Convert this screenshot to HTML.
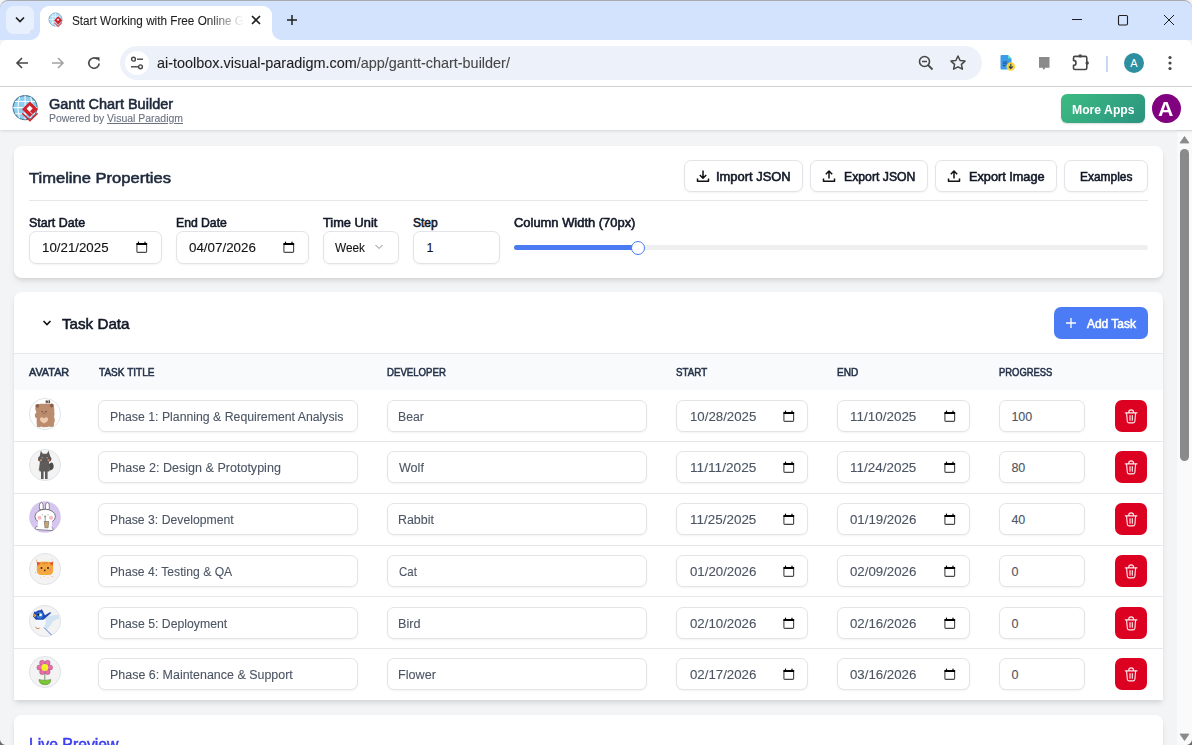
<!DOCTYPE html>
<html><head><meta charset="utf-8">
<style>
*{box-sizing:border-box;margin:0;padding:0}
html,body{width:1192px;height:745px;overflow:hidden;font-family:"Liberation Sans",sans-serif;background:#f3f4f6;position:relative}
.abs{position:absolute}
.t{position:absolute;white-space:nowrap;line-height:normal}
.card{background:#fff;border-radius:8px;box-shadow:0 4px 6px -1px rgba(0,0,0,.1),0 2px 4px -1px rgba(0,0,0,.06)}
.inp{position:absolute;background:#fff;border:1px solid #e2e4e8;border-radius:7px;box-shadow:0 1px 2px rgba(0,0,0,.05)}
.btn{position:absolute;background:#fff;border:1px solid #e2e4e8;border-radius:7px;box-shadow:0 1px 2px rgba(0,0,0,.05)}
.row-line{position:absolute;left:14px;width:1149px;height:1px;background:#e5e7eb}
.del{position:absolute;width:32px;height:32px;border-radius:7px;background:#dc0021}
</style></head>
<body>
<!-- TAB STRIP -->
<div class="abs" style="left:0;top:0;width:1192px;height:40px;background:#d3e3fd;border-radius:8px 8px 0 0;border-top:1px solid #a9abae"></div>
<div class="abs" style="left:6px;top:6px;width:28px;height:28px;border-radius:8px;background:#e8f0fe"></div>
<svg class="abs" style="left:14px;top:14px" width="12" height="12" viewBox="0 0 12 12"><path d="M2 3.5l4 4 4-4" fill="none" stroke="#1f1f1f" stroke-width="1.7"/></svg>
<div class="abs" style="left:40px;top:6px;width:232px;height:34px;background:#fff;border-radius:9px 9px 0 0"></div>
<div class="abs" style="left:30px;top:30px;width:10px;height:10px;background:radial-gradient(circle at 0 0,#d3e3fd 9.5px,#fff 10.5px)"></div>
<div class="abs" style="left:272px;top:30px;width:10px;height:10px;background:radial-gradient(circle at 100% 0,#d3e3fd 9.5px,#fff 10.5px)"></div>
<!-- favicon -->
<svg class="abs" style="left:48px;top:12px" width="16" height="16" viewBox="0 0 16 16">
<circle cx="7.5" cy="7.5" r="6.6" fill="#a9daf6" stroke="#8aa9b8" stroke-width="0.9"/>
<path d="M1 7.5h13M3 4.3h9M3 10.7h9M7.5 1v13M4.8 1.8v11.4" stroke="#e6f5fd" stroke-width="0.8" fill="none"/>
<path d="M10.2 4.2l4.1 4.1-4.1 4.1-4.1-4.1z" fill="#d3222b"/>
<path d="M10 6.4l1.3 1.3-1.3 1.3-1.3-1.3z" fill="#fff"/>
<path d="M6.4 10.6l3.8 3.8 3.8-3.8" fill="none" stroke="#e0585f" stroke-width="1.1"/>
</svg>
<svg class="abs" style="left:250px;top:14px" width="12" height="12" viewBox="0 0 12 12"><path d="M2 2l8 8M10 2l-8 8" stroke="#1f1f1f" stroke-width="1.6"/></svg>
<svg class="abs" style="left:286px;top:14px" width="12" height="12" viewBox="0 0 12 12"><path d="M6 1v10M1 6h10" stroke="#1f1f1f" stroke-width="1.5"/></svg>
<!-- window controls -->
<svg class="abs" style="left:1070px;top:13px" width="14" height="14" viewBox="0 0 14 14"><path d="M2 6.5h10" stroke="#1f1f1f" stroke-width="1"/></svg>
<svg class="abs" style="left:1116px;top:13px" width="14" height="14" viewBox="0 0 14 14"><rect x="2.5" y="2.5" width="9" height="9.5" rx="1.2" fill="none" stroke="#1f1f1f" stroke-width="1.1"/></svg>
<svg class="abs" style="left:1162px;top:13px" width="14" height="14" viewBox="0 0 14 14"><path d="M2 2l10 10M12 2l-10 10" stroke="#1f1f1f" stroke-width="1"/></svg>
<!-- TOOLBAR -->
<div class="abs" style="left:0;top:40px;width:1192px;height:46px;background:#fff;border-radius:8px 8px 0 0"></div>
<div class="abs" style="left:0;top:86px;width:1192px;height:1px;background:#d6d7da"></div>
<svg class="abs" style="left:14px;top:55px" width="16" height="16" viewBox="0 0 16 16"><path d="M14 8H3M8 3L3 8l5 5" fill="none" stroke="#474747" stroke-width="1.6"/></svg>
<svg class="abs" style="left:50px;top:55px" width="16" height="16" viewBox="0 0 16 16"><path d="M2 8h11M8 3l5 5-5 5" fill="none" stroke="#a3a3a3" stroke-width="1.6"/></svg>
<svg class="abs" style="left:86px;top:55px" width="16" height="16" viewBox="0 0 16 16"><path d="M13.2 8.5A5.2 5.2 0 1 1 11.5 4.2" fill="none" stroke="#474747" stroke-width="1.6"/><path d="M9.2 2.2h4.3v4.3z" fill="#474747"/></svg>
<div class="abs" style="left:120px;top:46px;width:862px;height:34px;border-radius:17px;background:#edf2fa"></div>
<div class="abs" style="left:125px;top:51px;width:24px;height:24px;border-radius:12px;background:#fff"></div>
<svg class="abs" style="left:129px;top:55px" width="16" height="16" viewBox="0 0 16 16"><circle cx="4.5" cy="4.2" r="1.9" fill="none" stroke="#474747" stroke-width="1.4"/><path d="M8 4.2h6" stroke="#474747" stroke-width="1.4"/><circle cx="11.5" cy="11.8" r="1.9" fill="none" stroke="#474747" stroke-width="1.4"/><path d="M2 11.8h7.5" stroke="#474747" stroke-width="1.4"/></svg>
<svg class="abs" style="left:917px;top:54px" width="18" height="18" viewBox="0 0 18 18"><circle cx="7.5" cy="7.5" r="5" fill="none" stroke="#474747" stroke-width="1.6"/><path d="M5 7.5h5" stroke="#474747" stroke-width="1.5"/><path d="M11 11l4.5 4.5" stroke="#474747" stroke-width="1.8"/></svg>
<svg class="abs" style="left:949px;top:54px" width="18" height="18" viewBox="0 0 18 18"><path d="M9 2l2.1 4.5 4.9.6-3.6 3.3 1 4.8L9 12.8l-4.4 2.4 1-4.8L2 7.1l4.9-.6z" fill="none" stroke="#474747" stroke-width="1.5" stroke-linejoin="round"/></svg>
<!-- extension icons -->
<svg class="abs" style="left:999px;top:54px" width="18" height="18" viewBox="0 0 18 18"><path d="M2.5 1h6.5l3.5 3.5v10a1 1 0 0 1-1 1h-9a1 1 0 0 1-1-1v-12.5a1 1 0 0 1 1-1z" fill="#3d9be9"/><path d="M9 1l3.5 3.5H9z" fill="#5fe0c8"/><path d="M3.8 8h4.5M3.8 9.8h4.5M3.8 11.6h3" stroke="#1d4f8c" stroke-width="0.9"/><circle cx="11.8" cy="12.5" r="4.3" fill="#f6d33a"/><path d="M11.8 9.8v4.5M9.9 12.5l1.9 1.9 1.9-1.9" fill="none" stroke="#263a5a" stroke-width="1.1"/></svg>
<svg class="abs" style="left:1036px;top:54px" width="16" height="18" viewBox="0 0 16 18"><path d="M3 3h10.5v10.8h-4.2l-1.5 2.2-1.5-2.2H3z" fill="#8a8a8a"/></svg>
<svg class="abs" style="left:1071px;top:53px" width="19" height="19" viewBox="0 0 19 19"><path d="M4 3.4h10.3q1.5 0 1.5 1.5v10.1q0 1.5-1.5 1.5H4q-1.5 0-1.5-1.5v-2.6a2.5 2.5 0 0 0 0-5V4.9q0-1.5 1.5-1.5z" fill="none" stroke="#474747" stroke-width="1.6" stroke-linejoin="round"/><circle cx="9.2" cy="2.9" r="1.7" fill="#474747"/><circle cx="16.2" cy="10" r="1.7" fill="#474747"/></svg>
<div class="abs" style="left:1106px;top:56px;width:2px;height:16px;background:#c7d7f5"></div>
<div class="abs" style="left:1124px;top:53px;width:20px;height:20px;border-radius:10px;background:#2e8fa0;color:#fff;font-size:11px;text-align:center;line-height:20px">A</div>
<svg class="abs" style="left:1162px;top:54px" width="16" height="18" viewBox="0 0 16 18"><circle cx="8" cy="3.5" r="1.6" fill="#474747"/><circle cx="8" cy="9" r="1.6" fill="#474747"/><circle cx="8" cy="14.5" r="1.6" fill="#474747"/></svg>

<!-- APP HEADER -->
<div class="abs" style="left:0;top:87px;width:1192px;height:43px;background:#fff;box-shadow:0 1px 3px rgba(0,0,0,.13)"></div>
<svg class="abs" style="left:11px;top:93px" width="29" height="29" viewBox="0 0 29 29">
<circle cx="14.1" cy="14.6" r="12" fill="#8fcdf0" stroke="#4d7f96" stroke-width="1.1"/>
<path d="M2.2 14.6h23.8M4 8.5h20M4 20.7h20M14.1 2.6v24M8.5 4q-3 10.6 0 21.2M19.7 4q3 10.6 0 21.2" stroke="#f3fbff" stroke-width="1.1" fill="none"/>
<path d="M18.9 8.5l8 7.8-8 7.8-8-7.8z" fill="#cf222c"/>
<path d="M18.7 12.4l3 3-3 3-3-3z" fill="#fff"/>
<path d="M16.2 15.9l5.6 5.6" stroke="#fff" stroke-width="0.8"/>
<path d="M11.2 20.2l7.7 7.4 7.7-7.4" fill="none" stroke="#cf222c" stroke-width="1.5"/>
</svg>
<div class="abs" style="left:1061px;top:94px;width:84px;height:29px;border-radius:6px;background:linear-gradient(135deg,#3dbb82,#2a9480);box-shadow:0 1px 2px rgba(0,0,0,.15)"></div>
<div class="abs" style="left:1152px;top:94px;width:29px;height:29px;border-radius:15px;background:#800080"></div>
<!-- CARD 1 -->
<div class="abs card" style="left:14px;top:146px;width:1149px;height:132px"></div>
<div class="abs" style="left:29px;top:200px;width:1119px;height:1px;background:#e5e7eb"></div>
<div class="btn" style="left:684px;top:160px;width:119px;height:32px"></div>
<div class="btn" style="left:810px;top:160px;width:118px;height:32px"></div>
<div class="btn" style="left:935px;top:160px;width:122px;height:32px"></div>
<div class="btn" style="left:1064px;top:160px;width:84px;height:32px"></div>
<svg class="abs" style="left:696px;top:169px" width="14" height="14" viewBox="0 0 14 14"><path d="M7 1.5v7.5M3.8 6l3.2 3.2L10.2 6M1.5 9.5v2.8h11V9.5" fill="none" stroke="#111" stroke-width="1.5" stroke-linejoin="round"/></svg>
<svg class="abs" style="left:822px;top:169px" width="14" height="14" viewBox="0 0 14 14"><path d="M7 9.5V2M3.8 5.2L7 2l3.2 3.2M1.5 9.5v2.8h11V9.5" fill="none" stroke="#111" stroke-width="1.5" stroke-linejoin="round"/></svg>
<svg class="abs" style="left:947px;top:169px" width="14" height="14" viewBox="0 0 14 14"><path d="M7 9.5V2M3.8 5.2L7 2l3.2 3.2M1.5 9.5v2.8h11V9.5" fill="none" stroke="#111" stroke-width="1.5" stroke-linejoin="round"/></svg>
<div class="inp" style="left:29px;top:231px;width:133px;height:33px"></div>
<div class="inp" style="left:176px;top:231px;width:133px;height:33px"></div>
<div class="inp" style="left:323px;top:231px;width:76px;height:33px"></div>
<div class="inp" style="left:413px;top:231px;width:87px;height:33px"></div>
<svg class="abs" style="left:135px;top:240.00px" width="13" height="14" viewBox="0 0 13 14"><path d="M1.9 4.6v6.9q0 .9.9.9h7.9q.9 0 .9-.9V4.6" stroke="#4a4a4a" stroke-width="1.15" fill="none"/><rect x="1.3" y="3.1" width="10.9" height="1.9" rx=".4" fill="#000"/><path d="M2.6 3.3l.9-2.2.9 2.2zM9.1 3.3l.9-2.2.9 2.2z" fill="#000"/></svg><svg class="abs" style="left:282px;top:240.00px" width="13" height="14" viewBox="0 0 13 14"><path d="M1.9 4.6v6.9q0 .9.9.9h7.9q.9 0 .9-.9V4.6" stroke="#4a4a4a" stroke-width="1.15" fill="none"/><rect x="1.3" y="3.1" width="10.9" height="1.9" rx=".4" fill="#000"/><path d="M2.6 3.3l.9-2.2.9 2.2zM9.1 3.3l.9-2.2.9 2.2z" fill="#000"/></svg>
<svg class="abs" style="left:374px;top:243px" width="10" height="8" viewBox="0 0 10 8"><path d="M1.5 2l3.5 3.5L8.5 2" fill="none" stroke="#8a8a8a" stroke-width="1"/></svg>
<div class="abs" style="left:514px;top:245px;width:634px;height:5px;border-radius:3px;background:#efefef"></div>
<div class="abs" style="left:514px;top:245px;width:124px;height:5px;border-radius:3px;background:#4a7bf3"></div>
<div class="abs" style="left:631px;top:241px;width:14px;height:14px;border-radius:7px;background:#fff;border:1.5px solid #4a7bf3"></div>
<!-- CARD 2 -->
<div class="abs card" style="left:14px;top:292px;width:1149px;height:408px;border-radius:8px 8px 0 0"></div>
<div class="abs" style="left:14px;top:353px;width:1149px;height:37px;background:#f8fafc;border-top:1px solid #e5e7eb"></div>
<svg class="abs" style="left:41px;top:317px" width="12" height="12" viewBox="0 0 12 12"><path d="M2.5 4l3.5 3.5L9.5 4" fill="none" stroke="#111" stroke-width="1.6"/></svg>
<div class="abs" style="left:1054px;top:307px;width:94px;height:32px;border-radius:7px;background:#4b7bf5"></div>
<svg class="abs" style="left:1065px;top:317px" width="12" height="12" viewBox="0 0 12 12"><path d="M6 1v10M1 6h10" stroke="#fff" stroke-width="1.3"/></svg>

<svg class="abs" style="left:27px;top:396px" width="36" height="36" viewBox="0 0 36 36"><circle cx="18" cy="18" r="15.6" fill="#fff" stroke="#dde1e8" stroke-width="0.9"/>
<path d="M19.2 4.3v3M21 4.3v3M19.2 5.8h1.8M22.6 4.3v3" stroke="#3a2a20" stroke-width="0.9"/>
<path d="M8.2 13q.2-5 5-5.2h9q4.8.2 5 5.2l.3 5-.4 2.5.8 4.3-.8 2.2-.3 3.5-3 .6-2-.6-1 .6-5 .2-1.2-.8-2 .7-2.6-.5-.4-4.3.1-4.2-1.6-.9-.3-3 1.6-1.7z" fill="#bc8c6e"/>
<circle cx="10.3" cy="9.8" r="1.9" fill="#8d5f45"/><circle cx="24.8" cy="9.5" r="1.9" fill="#8d5f45"/>
<circle cx="15.3" cy="15.8" r="0.8" fill="#6d4a38"/><circle cx="19" cy="15.8" r="0.8" fill="#6d4a38"/>
<path d="M16.2 17.3q1 .8 2 0" stroke="#6d4a38" stroke-width="0.5" fill="none"/>
<path d="M17 22.6q-2-2.3-3.6-.8-1.3 1.7.5 3.6l3.1 2.1 3.2-2.1q1.8-1.9.5-3.6-1.6-1.5-3.7.8z" fill="#eecaae"/>
</svg>
<div class="inp" style="left:98px;top:400.00px;width:260px;height:32px"></div>
<div class="inp" style="left:387px;top:400.00px;width:260px;height:32px"></div>
<div class="inp" style="left:676px;top:400.00px;width:132px;height:32px"></div>
<svg class="abs" style="left:782px;top:409.00px" width="13" height="14" viewBox="0 0 13 14"><path d="M1.9 4.6v6.9q0 .9.9.9h7.9q.9 0 .9-.9V4.6" stroke="#4a4a4a" stroke-width="1.15" fill="none"/><rect x="1.3" y="3.1" width="10.9" height="1.9" rx=".4" fill="#000"/><path d="M2.6 3.3l.9-2.2.9 2.2zM9.1 3.3l.9-2.2.9 2.2z" fill="#000"/></svg>
<div class="inp" style="left:837px;top:400.00px;width:133px;height:32px"></div>
<svg class="abs" style="left:943px;top:409.00px" width="13" height="14" viewBox="0 0 13 14"><path d="M1.9 4.6v6.9q0 .9.9.9h7.9q.9 0 .9-.9V4.6" stroke="#4a4a4a" stroke-width="1.15" fill="none"/><rect x="1.3" y="3.1" width="10.9" height="1.9" rx=".4" fill="#000"/><path d="M2.6 3.3l.9-2.2.9 2.2zM9.1 3.3l.9-2.2.9 2.2z" fill="#000"/></svg>
<div class="inp" style="left:999px;top:400.00px;width:86px;height:32px"></div>
<div class="del" style="left:1115px;top:400.00px"></div>
<svg class="abs" style="left:1124px;top:408.00px" width="14" height="16" viewBox="0 0 14 16"><path d="M1.3 4.8h11.7M4.8 4.6V4q0-2.2 2.35-2.2T9.5 4v.6M2.6 5l.7 8.2q.2 1.6 1.6 1.6h4.4q1.4 0 1.6-1.6l.7-8.2M6 7.6v4.6M8.3 7.6v4.6" fill="none" stroke="#fff" stroke-width="1.15" stroke-linejoin="round" stroke-linecap="round" opacity=".92"/></svg>
<div class="row-line" style="top:441px"></div>
<svg class="abs" style="left:27px;top:447px" width="36" height="36" viewBox="0 0 36 36"><circle cx="18" cy="18" r="15.6" fill="#f3f3f3" stroke="#dde1e8" stroke-width="0.9"/>
<path d="M13.8 3.8l2 3h4l1.8-3 1.2 4.2 1.4 4.6-1.4 1.6h-9.6l-1.6-1.6 1.4-4.6z" fill="#5c5858"/>
<path d="M11 11.5q0-2 2-2.2h9q2.2.2 2.4 2.2l-.4 2.3-2.5 1.2h-7.8l-2.4-1.2z" fill="#5c5858"/>
<circle cx="14" cy="13.3" r="1" fill="#e98a63"/><circle cx="21.5" cy="13.3" r="1" fill="#e98a63"/>
<path d="M14.6 10.8h1.6M19.4 10.8h1.6" stroke="#cfcfcf" stroke-width="0.6"/>
<path d="M12.8 15h9.2l.3 9.5h-9.7z" fill="#5f5b5a"/>
<path d="M12.8 16.5l-1.2 6.8 1.2.3z" fill="#5f5b5a"/>
<path d="M14 24h2.6v8h-2.6zM18 24h2.6v8h-2.6z" fill="#5f5b5a"/>
<path d="M22 17q3.8-3.8 4.6 1.5.6 4.2-4.3 5.3z" fill="#4d4a4a"/>
</svg>
<div class="inp" style="left:98px;top:451.00px;width:260px;height:32px"></div>
<div class="inp" style="left:387px;top:451.00px;width:260px;height:32px"></div>
<div class="inp" style="left:676px;top:451.00px;width:132px;height:32px"></div>
<svg class="abs" style="left:782px;top:460.00px" width="13" height="14" viewBox="0 0 13 14"><path d="M1.9 4.6v6.9q0 .9.9.9h7.9q.9 0 .9-.9V4.6" stroke="#4a4a4a" stroke-width="1.15" fill="none"/><rect x="1.3" y="3.1" width="10.9" height="1.9" rx=".4" fill="#000"/><path d="M2.6 3.3l.9-2.2.9 2.2zM9.1 3.3l.9-2.2.9 2.2z" fill="#000"/></svg>
<div class="inp" style="left:837px;top:451.00px;width:133px;height:32px"></div>
<svg class="abs" style="left:943px;top:460.00px" width="13" height="14" viewBox="0 0 13 14"><path d="M1.9 4.6v6.9q0 .9.9.9h7.9q.9 0 .9-.9V4.6" stroke="#4a4a4a" stroke-width="1.15" fill="none"/><rect x="1.3" y="3.1" width="10.9" height="1.9" rx=".4" fill="#000"/><path d="M2.6 3.3l.9-2.2.9 2.2zM9.1 3.3l.9-2.2.9 2.2z" fill="#000"/></svg>
<div class="inp" style="left:999px;top:451.00px;width:86px;height:32px"></div>
<div class="del" style="left:1115px;top:451.00px"></div>
<svg class="abs" style="left:1124px;top:459.00px" width="14" height="16" viewBox="0 0 14 16"><path d="M1.3 4.8h11.7M4.8 4.6V4q0-2.2 2.35-2.2T9.5 4v.6M2.6 5l.7 8.2q.2 1.6 1.6 1.6h4.4q1.4 0 1.6-1.6l.7-8.2M6 7.6v4.6M8.3 7.6v4.6" fill="none" stroke="#fff" stroke-width="1.15" stroke-linejoin="round" stroke-linecap="round" opacity=".92"/></svg>
<div class="row-line" style="top:493px"></div>
<svg class="abs" style="left:27px;top:499px" width="36" height="36" viewBox="0 0 36 36"><circle cx="18" cy="18" r="15.8" fill="#d6c5ef"/>
<path d="M12.5 10.5q-.6-7 1.8-7 2.4 0 1.8 7zM18.6 10.5q-.6-7 1.8-7 2.4 0 1.8 7z" fill="#fff" stroke="#4a4a4a" stroke-width="0.6"/>
<path d="M9.5 27.5l-1.5 2 1.7 1 8.5.6 7.5.4.5-1.5-2-2.5z" fill="#fff" stroke="#4a4a4a" stroke-width="0.6"/>
<ellipse cx="18.2" cy="17.5" rx="10.2" ry="7.2" fill="#fff" stroke="#4a4a4a" stroke-width="0.7"/>
<path d="M11 22l-.5 7 14 1 .5-8z" fill="#fff"/>
<circle cx="12.5" cy="18.8" r="2" fill="#f6b9be"/><circle cx="24" cy="18.8" r="2" fill="#f6b9be"/>
<path d="M14.8 15.8h1M20.5 15.8h1M17.2 17.5q1 1 2 0M18.2 16.5v7" stroke="#555" stroke-width="0.6" fill="none"/>
<path d="M17.3 22.5h4.5l-.7 6.3h-3.2z" fill="#caa36f" stroke="#555" stroke-width="0.5"/>
</svg>
<div class="inp" style="left:98px;top:503.00px;width:260px;height:32px"></div>
<div class="inp" style="left:387px;top:503.00px;width:260px;height:32px"></div>
<div class="inp" style="left:676px;top:503.00px;width:132px;height:32px"></div>
<svg class="abs" style="left:782px;top:512.00px" width="13" height="14" viewBox="0 0 13 14"><path d="M1.9 4.6v6.9q0 .9.9.9h7.9q.9 0 .9-.9V4.6" stroke="#4a4a4a" stroke-width="1.15" fill="none"/><rect x="1.3" y="3.1" width="10.9" height="1.9" rx=".4" fill="#000"/><path d="M2.6 3.3l.9-2.2.9 2.2zM9.1 3.3l.9-2.2.9 2.2z" fill="#000"/></svg>
<div class="inp" style="left:837px;top:503.00px;width:133px;height:32px"></div>
<svg class="abs" style="left:943px;top:512.00px" width="13" height="14" viewBox="0 0 13 14"><path d="M1.9 4.6v6.9q0 .9.9.9h7.9q.9 0 .9-.9V4.6" stroke="#4a4a4a" stroke-width="1.15" fill="none"/><rect x="1.3" y="3.1" width="10.9" height="1.9" rx=".4" fill="#000"/><path d="M2.6 3.3l.9-2.2.9 2.2zM9.1 3.3l.9-2.2.9 2.2z" fill="#000"/></svg>
<div class="inp" style="left:999px;top:503.00px;width:86px;height:32px"></div>
<div class="del" style="left:1115px;top:503.00px"></div>
<svg class="abs" style="left:1124px;top:511.00px" width="14" height="16" viewBox="0 0 14 16"><path d="M1.3 4.8h11.7M4.8 4.6V4q0-2.2 2.35-2.2T9.5 4v.6M2.6 5l.7 8.2q.2 1.6 1.6 1.6h4.4q1.4 0 1.6-1.6l.7-8.2M6 7.6v4.6M8.3 7.6v4.6" fill="none" stroke="#fff" stroke-width="1.15" stroke-linejoin="round" stroke-linecap="round" opacity=".92"/></svg>
<div class="row-line" style="top:545px"></div>
<svg class="abs" style="left:27px;top:551px" width="36" height="36" viewBox="0 0 36 36"><circle cx="18" cy="18" r="15.6" fill="#f3f3f3" stroke="#dde1e8" stroke-width="0.9"/>
<path d="M9.8 16q0-4.6 4-5.2h8.4q4 .6 4 5.2v3.5q-.3 4.5-4.3 4.5h-7.8q-4-.1-4.3-4.5z" fill="#f4a83f"/>
<path d="M9.6 10.6l4.2 1.3-3.3 3.3zM26.4 10.6l-4.2 1.3 3.3 3.3z" fill="#e8562b"/>
<path d="M16 11v2.4M18 10.8v2.6M20 11v2.4" stroke="#d57b32" stroke-width="0.9"/>
<circle cx="14.5" cy="17" r="1" fill="#3b2a20"/><circle cx="21" cy="17" r="1" fill="#3b2a20"/>
<circle cx="17.8" cy="19.3" r="0.9" fill="#3b2a20"/>
<circle cx="12.3" cy="18.5" r="1" fill="#f08a78"/><circle cx="23.2" cy="18.5" r="1" fill="#f08a78"/>
<circle cx="9.5" cy="9.2" r="0.6" fill="#f4a83f"/><circle cx="25" cy="8.8" r="0.6" fill="#f6b0a0"/><circle cx="8.5" cy="21.5" r="0.5" fill="#f4a83f"/><circle cx="17.3" cy="25.5" r="0.6" fill="#f4c070"/><circle cx="13.8" cy="26.8" r="0.5" fill="#f6b0a0"/><circle cx="25.3" cy="25.7" r="0.6" fill="#f6a0a0"/><circle cx="21" cy="26.8" r="0.5" fill="#f6b0a0"/>
</svg>
<div class="inp" style="left:98px;top:555.00px;width:260px;height:32px"></div>
<div class="inp" style="left:387px;top:555.00px;width:260px;height:32px"></div>
<div class="inp" style="left:676px;top:555.00px;width:132px;height:32px"></div>
<svg class="abs" style="left:782px;top:564.00px" width="13" height="14" viewBox="0 0 13 14"><path d="M1.9 4.6v6.9q0 .9.9.9h7.9q.9 0 .9-.9V4.6" stroke="#4a4a4a" stroke-width="1.15" fill="none"/><rect x="1.3" y="3.1" width="10.9" height="1.9" rx=".4" fill="#000"/><path d="M2.6 3.3l.9-2.2.9 2.2zM9.1 3.3l.9-2.2.9 2.2z" fill="#000"/></svg>
<div class="inp" style="left:837px;top:555.00px;width:133px;height:32px"></div>
<svg class="abs" style="left:943px;top:564.00px" width="13" height="14" viewBox="0 0 13 14"><path d="M1.9 4.6v6.9q0 .9.9.9h7.9q.9 0 .9-.9V4.6" stroke="#4a4a4a" stroke-width="1.15" fill="none"/><rect x="1.3" y="3.1" width="10.9" height="1.9" rx=".4" fill="#000"/><path d="M2.6 3.3l.9-2.2.9 2.2zM9.1 3.3l.9-2.2.9 2.2z" fill="#000"/></svg>
<div class="inp" style="left:999px;top:555.00px;width:86px;height:32px"></div>
<div class="del" style="left:1115px;top:555.00px"></div>
<svg class="abs" style="left:1124px;top:563.00px" width="14" height="16" viewBox="0 0 14 16"><path d="M1.3 4.8h11.7M4.8 4.6V4q0-2.2 2.35-2.2T9.5 4v.6M2.6 5l.7 8.2q.2 1.6 1.6 1.6h4.4q1.4 0 1.6-1.6l.7-8.2M6 7.6v4.6M8.3 7.6v4.6" fill="none" stroke="#fff" stroke-width="1.15" stroke-linejoin="round" stroke-linecap="round" opacity=".92"/></svg>
<div class="row-line" style="top:596px"></div>
<svg class="abs" style="left:27px;top:603px" width="36" height="36" viewBox="0 0 36 36"><circle cx="18" cy="18" r="15.6" fill="#f3f3f3" stroke="#dde1e8" stroke-width="0.9"/>
<path d="M18 15q6-3.5 13.8-3l.2 3.5-5.5 2.5-6 8.2-3-2.2z" fill="#d2e3f2"/>
<path d="M8.5 17.5q1-2.5 5-1.5l5 .5q1 5-2 7.5h-5.5q-3-2-2.5-6.5z" fill="#f4f8fc"/>
<path d="M7.3 8.5l1 .5 2.8-1.5 3-.6 .6-.8 1 1.6 2.2 4.5 5-3 1.5 .6-4.5 4-3.5 3h-7.5l-3.1-3.5z" fill="#2448b8"/>
<circle cx="12.8" cy="12.3" r="3.2" fill="#2f7fd8"/>
<circle cx="13.5" cy="11.8" r="1.4" fill="#fff"/><circle cx="11.2" cy="11.6" r="1.1" fill="#111"/>
<circle cx="7.6" cy="12.5" r="1.2" fill="#f3d62a"/><circle cx="7.4" cy="12.5" r="0.5" fill="#d9441d"/>
<path d="M17 24.5l7.5 7.5" stroke="#3b6cc0" stroke-width="0.9"/>
<path d="M8.3 24.2l1.7 1.3 2.6-.2" stroke="#d2691e" stroke-width="0.8" fill="none"/>
</svg>
<div class="inp" style="left:98px;top:607.00px;width:260px;height:32px"></div>
<div class="inp" style="left:387px;top:607.00px;width:260px;height:32px"></div>
<div class="inp" style="left:676px;top:607.00px;width:132px;height:32px"></div>
<svg class="abs" style="left:782px;top:616.00px" width="13" height="14" viewBox="0 0 13 14"><path d="M1.9 4.6v6.9q0 .9.9.9h7.9q.9 0 .9-.9V4.6" stroke="#4a4a4a" stroke-width="1.15" fill="none"/><rect x="1.3" y="3.1" width="10.9" height="1.9" rx=".4" fill="#000"/><path d="M2.6 3.3l.9-2.2.9 2.2zM9.1 3.3l.9-2.2.9 2.2z" fill="#000"/></svg>
<div class="inp" style="left:837px;top:607.00px;width:133px;height:32px"></div>
<svg class="abs" style="left:943px;top:616.00px" width="13" height="14" viewBox="0 0 13 14"><path d="M1.9 4.6v6.9q0 .9.9.9h7.9q.9 0 .9-.9V4.6" stroke="#4a4a4a" stroke-width="1.15" fill="none"/><rect x="1.3" y="3.1" width="10.9" height="1.9" rx=".4" fill="#000"/><path d="M2.6 3.3l.9-2.2.9 2.2zM9.1 3.3l.9-2.2.9 2.2z" fill="#000"/></svg>
<div class="inp" style="left:999px;top:607.00px;width:86px;height:32px"></div>
<div class="del" style="left:1115px;top:607.00px"></div>
<svg class="abs" style="left:1124px;top:615.00px" width="14" height="16" viewBox="0 0 14 16"><path d="M1.3 4.8h11.7M4.8 4.6V4q0-2.2 2.35-2.2T9.5 4v.6M2.6 5l.7 8.2q.2 1.6 1.6 1.6h4.4q1.4 0 1.6-1.6l.7-8.2M6 7.6v4.6M8.3 7.6v4.6" fill="none" stroke="#fff" stroke-width="1.15" stroke-linejoin="round" stroke-linecap="round" opacity=".92"/></svg>
<div class="row-line" style="top:648px"></div>
<svg class="abs" style="left:27px;top:654px" width="36" height="36" viewBox="0 0 36 36"><circle cx="18" cy="18" r="15.6" fill="#f3f3f3" stroke="#dde1e8" stroke-width="0.9"/>
<path d="M17.8 19v7.5" stroke="#7a9a6a" stroke-width="1"/>
<path d="M12 25.5q5.8 1.8 11.8 0l-.3 2q-.7 3-5.6 3.2-4.8-.2-5.6-3.2z" fill="#79c92f" stroke="#2e5a1a" stroke-width="0.4"/>
<g fill="#ef6bab" stroke="#6b3a50" stroke-width="0.35">
<circle cx="15.2" cy="8.8" r="2.6"/><circle cx="20.5" cy="8.8" r="2.6"/><circle cx="23" cy="13.5" r="2.6"/><circle cx="20.5" cy="18" r="2.6"/><circle cx="15.2" cy="18" r="2.6"/><circle cx="12.5" cy="13.5" r="2.6"/>
</g>
<circle cx="17.8" cy="13.5" r="3.4" fill="#f8f22a"/>
<path d="M16.6 14.2q1.2 1 2.4 0" stroke="#c9b400" stroke-width="0.4" fill="none"/>
</svg>
<div class="inp" style="left:98px;top:658.00px;width:260px;height:32px"></div>
<div class="inp" style="left:387px;top:658.00px;width:260px;height:32px"></div>
<div class="inp" style="left:676px;top:658.00px;width:132px;height:32px"></div>
<svg class="abs" style="left:782px;top:667.00px" width="13" height="14" viewBox="0 0 13 14"><path d="M1.9 4.6v6.9q0 .9.9.9h7.9q.9 0 .9-.9V4.6" stroke="#4a4a4a" stroke-width="1.15" fill="none"/><rect x="1.3" y="3.1" width="10.9" height="1.9" rx=".4" fill="#000"/><path d="M2.6 3.3l.9-2.2.9 2.2zM9.1 3.3l.9-2.2.9 2.2z" fill="#000"/></svg>
<div class="inp" style="left:837px;top:658.00px;width:133px;height:32px"></div>
<svg class="abs" style="left:943px;top:667.00px" width="13" height="14" viewBox="0 0 13 14"><path d="M1.9 4.6v6.9q0 .9.9.9h7.9q.9 0 .9-.9V4.6" stroke="#4a4a4a" stroke-width="1.15" fill="none"/><rect x="1.3" y="3.1" width="10.9" height="1.9" rx=".4" fill="#000"/><path d="M2.6 3.3l.9-2.2.9 2.2zM9.1 3.3l.9-2.2.9 2.2z" fill="#000"/></svg>
<div class="inp" style="left:999px;top:658.00px;width:86px;height:32px"></div>
<div class="del" style="left:1115px;top:658.00px"></div>
<svg class="abs" style="left:1124px;top:666.00px" width="14" height="16" viewBox="0 0 14 16"><path d="M1.3 4.8h11.7M4.8 4.6V4q0-2.2 2.35-2.2T9.5 4v.6M2.6 5l.7 8.2q.2 1.6 1.6 1.6h4.4q1.4 0 1.6-1.6l.7-8.2M6 7.6v4.6M8.3 7.6v4.6" fill="none" stroke="#fff" stroke-width="1.15" stroke-linejoin="round" stroke-linecap="round" opacity=".92"/></svg>
<!-- CARD 3 -->
<div class="abs card" style="left:14px;top:715px;width:1149px;height:100px"></div>
<!-- TEXT -->
<div class="t" style="left:72.40px;top:14.14px;font-size:12px;color:#1f1f1f;-webkit-text-stroke:0.1px #1f1f1f;transform:scaleX(0.9780);transform-origin:0 0;-webkit-mask-image:linear-gradient(90deg,#000 138px,rgba(0,0,0,.12) 171px,transparent 176px);">Start Working with Free Online Gantt</div>
<div class="t" style="left:157.30px;top:55.08px;font-size:14.5px;color:#1f1f1f;-webkit-text-stroke:0.1px #1f1f1f;transform:scaleX(0.9952);transform-origin:0 0;">ai-toolbox.visual-paradigm.com<span style="color:#474747;-webkit-text-stroke-color:#474747">/app/gantt-chart-builder/</span></div>
<div class="t" style="left:48.60px;top:95.53px;font-size:14px;color:#1e293b;-webkit-text-stroke:0.55px #1e293b;transform:scaleX(1.0354);transform-origin:0 0;">Gantt Chart Builder</div>
<div class="t" style="left:48.70px;top:112.15px;font-size:11px;color:#6b7280;-webkit-text-stroke:0.1px #6b7280;transform:scaleX(0.9498);transform-origin:0 0;">Powered by <span style="text-decoration:underline;text-underline-offset:1px">Visual Paradigm</span></div>
<div class="t" style="left:1072.00px;top:102.23px;font-size:13px;color:#ffffff;font-weight:bold;transform:scaleX(0.9381);transform-origin:0 0;">More Apps</div>
<div class="t" style="left:1158.40px;top:98.30px;font-size:20px;color:#ffffff;font-weight:bold;transform:scaleX(1.0643);transform-origin:0 0;">A</div>
<div class="t" style="left:29.00px;top:169.43px;font-size:15px;color:#1e293b;-webkit-text-stroke:0.55px #1e293b;transform:scaleX(1.1033);transform-origin:0 0;">Timeline Properties</div>
<div class="t" style="left:716.42px;top:170.34px;font-size:12px;color:#111827;-webkit-text-stroke:0.55px #111827;transform:scaleX(1.0772);transform-origin:0 0;">Import JSON</div>
<div class="t" style="left:844.20px;top:170.34px;font-size:12px;color:#111827;-webkit-text-stroke:0.55px #111827;transform:scaleX(1.0200);transform-origin:0 0;">Export JSON</div>
<div class="t" style="left:968.70px;top:170.34px;font-size:12px;color:#111827;-webkit-text-stroke:0.55px #111827;transform:scaleX(1.0589);transform-origin:0 0;">Export Image</div>
<div class="t" style="left:1079.80px;top:170.34px;font-size:12px;color:#111827;-webkit-text-stroke:0.55px #111827;transform:scaleX(0.9955);transform-origin:0 0;">Examples</div>
<div class="t" style="left:29.10px;top:215.54px;font-size:12px;color:#111827;-webkit-text-stroke:0.55px #111827;transform:scaleX(1.0383);transform-origin:0 0;">Start Date</div>
<div class="t" style="left:176.30px;top:215.54px;font-size:12px;color:#111827;-webkit-text-stroke:0.55px #111827;transform:scaleX(1.0155);transform-origin:0 0;">End Date</div>
<div class="t" style="left:323.40px;top:215.54px;font-size:12px;color:#111827;-webkit-text-stroke:0.55px #111827;transform:scaleX(1.0670);transform-origin:0 0;">Time Unit</div>
<div class="t" style="left:413.00px;top:215.54px;font-size:12px;color:#111827;-webkit-text-stroke:0.55px #111827;">Step</div>
<div class="t" style="left:514.00px;top:215.54px;font-size:12px;color:#111827;-webkit-text-stroke:0.55px #111827;transform:scaleX(1.0772);transform-origin:0 0;">Column Width (70px)</div>
<div class="t" style="left:42.30px;top:240.89px;font-size:12.5px;color:#111111;-webkit-text-stroke:0.1px #111111;transform:scaleX(1.0636);transform-origin:0 0;">10/21/2025</div>
<div class="t" style="left:189.00px;top:240.89px;font-size:12.5px;color:#111111;-webkit-text-stroke:0.1px #111111;transform:scaleX(1.0684);transform-origin:0 0;">04/07/2026</div>
<div class="t" style="left:335.20px;top:240.89px;font-size:12.5px;color:#111111;-webkit-text-stroke:0.1px #111111;transform:scaleX(0.9455);transform-origin:0 0;">Week</div>
<div class="t" style="left:426.40px;top:240.89px;font-size:12.5px;color:#111111;-webkit-text-stroke:0.1px #111111;">1</div>
<div class="t" style="left:62.30px;top:315.43px;font-size:15px;color:#111827;-webkit-text-stroke:0.55px #111827;transform:scaleX(1.0118);transform-origin:0 0;">Task Data</div>
<div class="t" style="left:1086.70px;top:317.04px;font-size:12px;color:#ffffff;-webkit-text-stroke:0.55px #ffffff;transform:scaleX(0.9959);transform-origin:0 0;">Add Task</div>
<div class="t" style="left:29.00px;top:366.44px;font-size:11px;color:#243149;-webkit-text-stroke:0.55px #243149;transform:scaleX(0.9867);transform-origin:0 0;">AVATAR</div>
<div class="t" style="left:98.80px;top:366.44px;font-size:11px;color:#243149;-webkit-text-stroke:0.55px #243149;transform:scaleX(0.9144);transform-origin:0 0;">TASK TITLE</div>
<div class="t" style="left:387.40px;top:366.44px;font-size:11px;color:#243149;-webkit-text-stroke:0.55px #243149;transform:scaleX(0.8754);transform-origin:0 0;">DEVELOPER</div>
<div class="t" style="left:675.60px;top:366.44px;font-size:11px;color:#243149;-webkit-text-stroke:0.55px #243149;transform:scaleX(0.8893);transform-origin:0 0;">START</div>
<div class="t" style="left:837.40px;top:366.44px;font-size:11px;color:#243149;-webkit-text-stroke:0.55px #243149;transform:scaleX(0.9148);transform-origin:0 0;">END</div>
<div class="t" style="left:999.20px;top:366.44px;font-size:11px;color:#243149;-webkit-text-stroke:0.55px #243149;transform:scaleX(0.8552);transform-origin:0 0;">PROGRESS</div>
<div class="t" style="left:109.72px;top:409.89px;font-size:12.5px;color:#4b5563;-webkit-text-stroke:0.1px #4b5563;transform:scaleX(0.9824);transform-origin:0 0;">Phase 1: Planning &amp; Requirement Analysis</div>
<div class="t" style="left:398.02px;top:409.89px;font-size:12.5px;color:#4b5563;-webkit-text-stroke:0.1px #4b5563;transform:scaleX(0.9786);transform-origin:0 0;">Bear</div>
<div class="t" style="left:689.50px;top:409.89px;font-size:12.5px;color:#4b5563;-webkit-text-stroke:0.1px #4b5563;transform:scaleX(1.0605);transform-origin:0 0;">10/28/2025</div>
<div class="t" style="left:850.30px;top:409.89px;font-size:12.5px;color:#4b5563;-webkit-text-stroke:0.1px #4b5563;transform:scaleX(1.0764);transform-origin:0 0;">11/10/2025</div>
<div class="t" style="left:1011.40px;top:409.89px;font-size:12.5px;color:#4b5563;-webkit-text-stroke:0.1px #4b5563;">100</div>
<div class="t" style="left:109.70px;top:460.89px;font-size:12.5px;color:#4b5563;-webkit-text-stroke:0.1px #4b5563;transform:scaleX(1.0036);transform-origin:0 0;">Phase 2: Design &amp; Prototyping</div>
<div class="t" style="left:399.00px;top:460.89px;font-size:12.5px;color:#4b5563;-webkit-text-stroke:0.1px #4b5563;transform:scaleX(1.0039);transform-origin:0 0;">Wolf</div>
<div class="t" style="left:689.50px;top:460.89px;font-size:12.5px;color:#4b5563;-webkit-text-stroke:0.1px #4b5563;transform:scaleX(1.0928);transform-origin:0 0;">11/11/2025</div>
<div class="t" style="left:850.30px;top:460.89px;font-size:12.5px;color:#4b5563;-webkit-text-stroke:0.1px #4b5563;transform:scaleX(1.0764);transform-origin:0 0;">11/24/2025</div>
<div class="t" style="left:1011.40px;top:460.89px;font-size:12.5px;color:#4b5563;-webkit-text-stroke:0.1px #4b5563;">80</div>
<div class="t" style="left:109.72px;top:512.89px;font-size:12.5px;color:#4b5563;-webkit-text-stroke:0.1px #4b5563;transform:scaleX(0.9779);transform-origin:0 0;">Phase 3: Development</div>
<div class="t" style="left:398.01px;top:512.89px;font-size:12.5px;color:#4b5563;-webkit-text-stroke:0.1px #4b5563;transform:scaleX(0.9927);transform-origin:0 0;">Rabbit</div>
<div class="t" style="left:689.50px;top:512.89px;font-size:12.5px;color:#4b5563;-webkit-text-stroke:0.1px #4b5563;transform:scaleX(1.0764);transform-origin:0 0;">11/25/2025</div>
<div class="t" style="left:850.30px;top:512.89px;font-size:12.5px;color:#4b5563;-webkit-text-stroke:0.1px #4b5563;transform:scaleX(1.0605);transform-origin:0 0;">01/19/2026</div>
<div class="t" style="left:1011.40px;top:512.89px;font-size:12.5px;color:#4b5563;-webkit-text-stroke:0.1px #4b5563;">40</div>
<div class="t" style="left:109.73px;top:564.89px;font-size:12.5px;color:#4b5563;-webkit-text-stroke:0.1px #4b5563;transform:scaleX(0.9735);transform-origin:0 0;">Phase 4: Testing &amp; QA</div>
<div class="t" style="left:399.00px;top:564.89px;font-size:12.5px;color:#4b5563;-webkit-text-stroke:0.1px #4b5563;transform:scaleX(0.9164);transform-origin:0 0;">Cat</div>
<div class="t" style="left:689.50px;top:564.89px;font-size:12.5px;color:#4b5563;-webkit-text-stroke:0.1px #4b5563;transform:scaleX(1.0605);transform-origin:0 0;">01/20/2026</div>
<div class="t" style="left:850.30px;top:564.89px;font-size:12.5px;color:#4b5563;-webkit-text-stroke:0.1px #4b5563;transform:scaleX(1.0605);transform-origin:0 0;">02/09/2026</div>
<div class="t" style="left:1011.40px;top:564.89px;font-size:12.5px;color:#4b5563;-webkit-text-stroke:0.1px #4b5563;">0</div>
<div class="t" style="left:109.72px;top:616.89px;font-size:12.5px;color:#4b5563;-webkit-text-stroke:0.1px #4b5563;transform:scaleX(0.9804);transform-origin:0 0;">Phase 5: Deployment</div>
<div class="t" style="left:397.99px;top:616.89px;font-size:12.5px;color:#4b5563;-webkit-text-stroke:0.1px #4b5563;transform:scaleX(1.0104);transform-origin:0 0;">Bird</div>
<div class="t" style="left:689.50px;top:616.89px;font-size:12.5px;color:#4b5563;-webkit-text-stroke:0.1px #4b5563;transform:scaleX(1.0605);transform-origin:0 0;">02/10/2026</div>
<div class="t" style="left:850.30px;top:616.89px;font-size:12.5px;color:#4b5563;-webkit-text-stroke:0.1px #4b5563;transform:scaleX(1.0605);transform-origin:0 0;">02/16/2026</div>
<div class="t" style="left:1011.40px;top:616.89px;font-size:12.5px;color:#4b5563;-webkit-text-stroke:0.1px #4b5563;">0</div>
<div class="t" style="left:109.70px;top:667.89px;font-size:12.5px;color:#4b5563;-webkit-text-stroke:0.1px #4b5563;transform:scaleX(0.9963);transform-origin:0 0;">Phase 6: Maintenance &amp; Support</div>
<div class="t" style="left:397.99px;top:667.89px;font-size:12.5px;color:#4b5563;-webkit-text-stroke:0.1px #4b5563;transform:scaleX(1.0098);transform-origin:0 0;">Flower</div>
<div class="t" style="left:689.50px;top:667.89px;font-size:12.5px;color:#4b5563;-webkit-text-stroke:0.1px #4b5563;transform:scaleX(1.0605);transform-origin:0 0;">02/17/2026</div>
<div class="t" style="left:850.30px;top:667.89px;font-size:12.5px;color:#4b5563;-webkit-text-stroke:0.1px #4b5563;transform:scaleX(1.0605);transform-origin:0 0;">03/16/2026</div>
<div class="t" style="left:1011.40px;top:667.89px;font-size:12.5px;color:#4b5563;-webkit-text-stroke:0.1px #4b5563;">0</div>
<div class="t" style="left:28.81px;top:735.92px;font-size:16px;color:#3c3ff0;-webkit-text-stroke:0.55px #3c3ff0;transform:scaleX(0.9868);transform-origin:0 0;">Live Preview</div>
<!-- SCROLLBAR -->
<div class="abs" style="left:1177px;top:131px;width:15px;height:614px;background:#fafafa"></div>
<div class="abs" style="left:1180px;top:149px;width:9px;height:312px;border-radius:4.5px;background:#8a8a8a"></div>
<div class="abs" style="left:1177px;top:130px;width:15px;height:4px;background:linear-gradient(rgba(0,0,0,.06),rgba(0,0,0,0))"></div>
<svg class="abs" style="left:1179px;top:135px" width="11" height="9" viewBox="0 0 11 9"><path d="M1 8h9L5.5 1.5z" fill="#8a8a8a" stroke="#8a8a8a" stroke-width="0.8" stroke-linejoin="round"/></svg>
<svg class="abs" style="left:1179px;top:733px" width="11" height="9" viewBox="0 0 11 9"><path d="M1 1h9L5.5 7.5z" fill="#8a8a8a" stroke="#8a8a8a" stroke-width="0.8" stroke-linejoin="round"/></svg>
<div class="abs" style="left:0;top:739px;width:6px;height:6px;background:radial-gradient(circle at 6px 0,transparent 5.5px,#6a6a6a 6.5px)"></div>
<div class="abs" style="left:1186px;top:739px;width:6px;height:6px;background:radial-gradient(circle at 0 0,transparent 5.5px,#6a6a6a 6.5px)"></div>
</body></html>
